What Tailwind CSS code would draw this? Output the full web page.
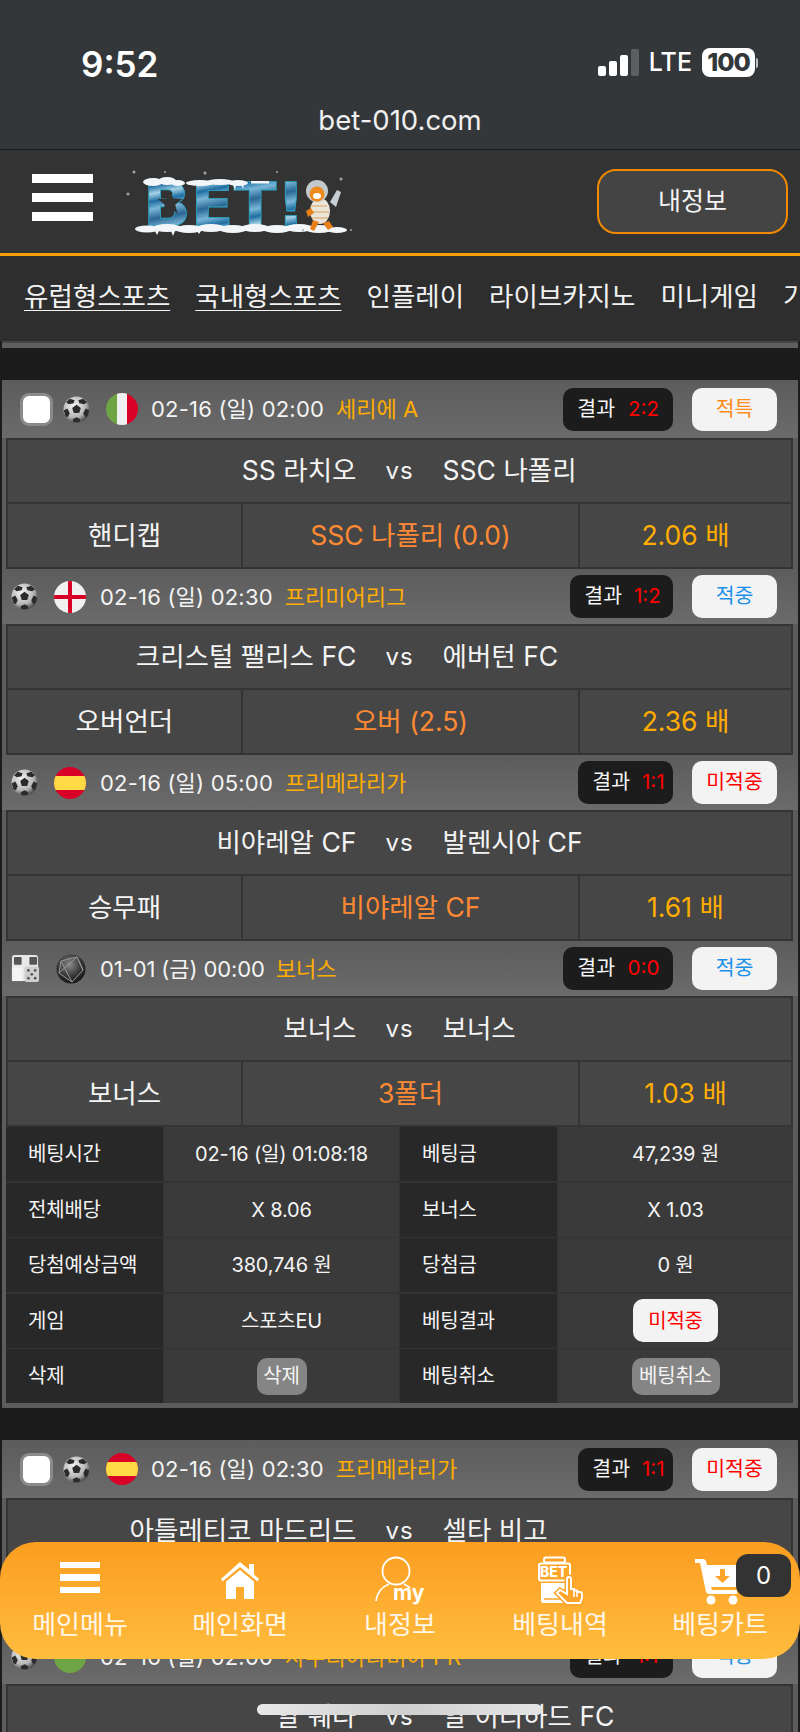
<!DOCTYPE html>
<html lang="ko">
<head>
<meta charset="UTF-8">
<meta name="viewport" content="width=device-width, initial-scale=1.0">
<title>bet-010.com</title>
<script src="https://cdn.jsdelivr.net/npm/@tailwindcss/browser@4"></script>
</head>
<body class="bg-[#1c1c1c] font-['Inter','Noto_Sans_CJK_KR',sans-serif] text-[#f4f4f4]">

<!-- 공용 아이콘 -->
<svg class="absolute w-0 h-0" xmlns="http://www.w3.org/2000/svg">
  <defs>
    <radialGradient id="ballBg" cx="40%" cy="35%" r="70%"><stop offset="0" stop-color="#f4f4f4"/><stop offset="0.65" stop-color="#b5b5b5"/><stop offset="1" stop-color="#3c3c3c"/></radialGradient>
    <radialGradient id="globeBg" cx="45%" cy="35%" r="70%"><stop offset="0" stop-color="#8a8a8a"/><stop offset="0.6" stop-color="#333"/><stop offset="1" stop-color="#111"/></radialGradient>
    <clipPath id="flagClip"><circle cx="16" cy="16" r="16"/></clipPath>
  </defs>
  <symbol id="ball" viewBox="0 0 28 28">
    <circle cx="14" cy="14" r="13.5" fill="url(#ballBg)"/>
    <polygon points="14,9 18.5,12.5 16.8,17.5 11.2,17.5 9.5,12.5" fill="#2b2b2b"/>
    <path d="M7 2.8 12 4.5 11 7.5 6 8.5 3.2 6.5ZM21 2.8 25 6.5 22 8.5 17 7.5 16 4.5ZM.8 15 4.5 13 7 18 5 22 2.6 21ZM27.2 15 25.4 21 23 22 21 18 23.5 13ZM10 24 14 22 18 24 17 27.2 11 27.2Z" fill="#2b2b2b"/>
  </symbol>
  <symbol id="flag-it" viewBox="0 0 32 32"><g clip-path="url(#flagClip)"><rect width="11" height="32" fill="#6da544"/><rect x="11" width="10" height="32" fill="#f0f0f0"/><rect x="21" width="11" height="32" fill="#d80027"/></g></symbol>
  <symbol id="flag-en" viewBox="0 0 32 32"><g clip-path="url(#flagClip)"><rect width="32" height="32" fill="#f0f0f0"/><rect x="14" width="4" height="32" fill="#d80027"/><rect y="14" width="32" height="4" fill="#d80027"/></g></symbol>
  <symbol id="flag-es" viewBox="0 0 32 32"><g clip-path="url(#flagClip)"><rect width="32" height="32" fill="#d80027"/><rect y="9" width="32" height="14" fill="#ffda44"/></g></symbol>
  <symbol id="flag-sa" viewBox="0 0 32 32"><g clip-path="url(#flagClip)"><rect width="32" height="32" fill="#6da544"/><rect x="8" y="8" width="16" height="5" fill="#f0f0f0"/></g></symbol>
  <symbol id="globe" viewBox="0 0 32 32">
    <circle cx="16" cy="16" r="14.5" fill="url(#globeBg)"/>
    <path d="M6 8 22 4 28 17 17 29 4 20ZM6 8 17 29M22 4 4 20M22 4 28 17" fill="none" stroke="#9a9a9a" stroke-width="1"/>
  </symbol>
  <symbol id="bonus" viewBox="0 0 30 30">
    <rect x="1" y="1" width="27" height="27" rx="3" fill="#e8e8e8"/>
    <rect x="3" y="3" width="8" height="8" rx="1" fill="#555"/><rect x="19" y="3" width="8" height="8" rx="1" fill="#555"/>
    <rect x="1" y="14" width="11" height="14" fill="#f4f4f4"/>
    <rect x="14" y="13" width="15" height="16" rx="2" fill="#cfcfcf"/>
    <circle cx="18" cy="17" r="1.4" fill="#555"/><circle cx="25" cy="17" r="1.4" fill="#555"/><circle cx="21.500" cy="21" r="1.4" fill="#555"/><circle cx="18" cy="25" r="1.4" fill="#555"/><circle cx="25" cy="25" r="1.4" fill="#555"/>
  </symbol>
</svg>

<div class="relative h-[1732px] w-[800px] overflow-hidden bg-[#1c1c1c]">

  <!-- 브라우저 상단 -->
  <div class="h-[149px] bg-[#34373a] relative">
    <div class="flex justify-between items-start pt-[44px] pl-[81px] pr-[42px]">
      <span class="text-[35px] leading-[40px] font-semibold text-white">9:52</span>
      <div class="flex items-center gap-[10px] pt-[4px]">
        <div class="flex items-end gap-[3px] h-[27px]">
          <span class="w-[8px] h-[10px] rounded-[2px] bg-white"></span>
          <span class="w-[8px] h-[15px] rounded-[2px] bg-white"></span>
          <span class="w-[8px] h-[21px] rounded-[2px] bg-white"></span>
          <span class="w-[8px] h-[27px] rounded-[2px] bg-[#5c5f62]"></span>
        </div>
        <span class="text-[25px] leading-[27px] font-medium text-white">LTE</span>
        <div class="flex items-center gap-[1px]">
          <span class="w-[53px] h-[29px] rounded-[8px] bg-white text-[#34373a] text-[25px] leading-[29px] font-extrabold text-center tracking-[-1px]">100</span>
          <span class="w-[2px] h-[10px] rounded-r-sm bg-white/70"></span>
        </div>
      </div>
    </div>
    <p class="absolute top-[104px] inset-x-0 text-center text-[27.5px] leading-[32px] text-[#f0f0f0]">bet-010.com</p>
  </div>

  <!-- 헤더 -->
  <header class="h-[107px] border-t border-[#1e1e1e] border-b-[3px] border-b-[#f7a000] bg-[#333333] flex items-center pl-[32px] pr-[12px]">
    <div class="flex flex-col gap-[10px] w-[61px] -mt-[9px]">
      <span class="h-[9px] bg-white"></span>
      <span class="h-[9px] bg-white"></span>
      <span class="h-[9px] bg-white"></span>
    </div>
    <!-- 로고 -->
    <svg class="ml-[32px] w-[230px] h-[68px] overflow-visible" viewBox="0 0 230 68">
      <defs>
        <linearGradient id="ice" x1="0" y1="0" x2="0.14" y2="0.3" spreadMethod="reflect"><stop offset="0" stop-color="#2a6794"/><stop offset="0.4" stop-color="#7ab6d8"/><stop offset="0.7" stop-color="#1f6ea3"/><stop offset="1" stop-color="#a4d3e6"/></linearGradient>
      </defs>
      <text x="18" y="58" font-family="DejaVu Sans" font-weight="700" font-size="60" textLength="162" lengthAdjust="spacingAndGlyphs" fill="url(#ice)" stroke="#2aa7c4" stroke-width="0.8">BET!</text>
      <polygon points="45,22 48.2,30.5 57.4,31 50.2,36.7 52.6,45.5 45,40.5 37.4,45.5 39.8,36.7 32.6,31 41.8,30.5" fill="#333"/>
      <!-- 눈 -->
      <g fill="#f3f6f8">
        <ellipse cx="28" cy="14" rx="10" ry="4"/><ellipse cx="42" cy="13" rx="9" ry="4"/><ellipse cx="53" cy="15" rx="7" ry="3"/>
        <ellipse cx="75" cy="15" rx="14" ry="3"/><ellipse cx="95" cy="14" rx="14" ry="3"/><ellipse cx="113" cy="15" rx="10" ry="3"/>
        <path d="M108 16h3l-1 7ZM116 16h3l-1 5Z"/>
        <rect x="126" y="13" width="18" height="2.500"/>
        <ellipse cx="22" cy="61" rx="12" ry="3.500"/><ellipse cx="42" cy="60" rx="14" ry="4"/><ellipse cx="64" cy="61" rx="14" ry="4"/><ellipse cx="86" cy="60" rx="14" ry="4"/>
        <ellipse cx="108" cy="61" rx="14" ry="4"/><ellipse cx="130" cy="60" rx="14" ry="4"/><ellipse cx="152" cy="61" rx="14" ry="4"/><ellipse cx="174" cy="60" rx="14" ry="4"/><ellipse cx="194" cy="61" rx="14" ry="4"/><ellipse cx="212" cy="62" rx="10" ry="3"/>
        <path d="M30 63h4l-2 4ZM46 63h4l-2 5ZM72 63h4l-2 3Z"/>
      </g>
      <!-- 호랑이 캐릭터 -->
      <path d="M205 34l7-12 4 2-5 15Z" fill="#c9ced4"/>
      <ellipse cx="195" cy="43" rx="10" ry="13" fill="#ece6da"/>
      <path d="M186 38h16M186 44h18M187 50h16" stroke="#d9a05a" stroke-width="1"/>
      <circle cx="192" cy="23" r="11" fill="#c2c8ce"/>
      <circle cx="192" cy="26" r="7.500" fill="#ee8a1c"/>
      <ellipse cx="192" cy="28" rx="4" ry="3" fill="#fff"/>
      <path d="M186 40l-5 3 2 6 6-4ZM204 53l4 6-5 3-5-7ZM188 52l-3 9 4 2 5-9Z" fill="#e8801a"/>
      <g fill="#a5a5a5">
        <circle cx="80" cy="5" r="1.500"/><circle cx="152" cy="4" r="1"/><circle cx="3" cy="26" r="1.500"/><circle cx="40" cy="4" r="1"/><circle cx="216" cy="11" r="1.500"/><circle cx="226" cy="62" r="1"/><circle cx="9" cy="4" r="1.500"/><circle cx="178" cy="62" r="1"/>
      </g>
    </svg>
    <button class="ml-auto w-[191px] h-[65px] rounded-[19px] border-[2.5px] border-[#f28a00] bg-[#444444] text-[25px] text-[#f4f4f4]">내정보</button>
  </header>

  <!-- 상단 메뉴 -->
  <nav class="h-[85px] bg-[#2e2e2e] flex items-center pl-[24px] gap-[25px] whitespace-nowrap text-[26.5px] text-[#f2f2f2] pb-[3px]">
    <a class="underline underline-offset-4 decoration-1">유럽형스포츠</a>
    <a class="underline underline-offset-4 decoration-1">국내형스포츠</a>
    <a>인플레이</a>
    <a>라이브카지노</a>
    <a>미니게임</a>
    <a>가상게임</a>
  </nav>
  <div class="h-[7px] mx-[2px] bg-[#5e5e5e] border-t-2 border-[#454545]"></div>

  <!-- 베팅 내역 1 -->
  <section class="mt-[32px] mx-[2px] pl-[4px] pr-[5px] pb-[5px] bg-[#5c5c5c]">
    <div class="h-[58px] -mx-[4px] -mr-[5px] pl-[18px] pr-[21px] flex items-center bg-gradient-to-b from-[#5c5c5c] to-[#6b6b6b]">
      <span class="w-[33px] h-[33px] rounded-[9px] bg-white border-[3px] border-[#8a8a8a]"></span>
      <svg class="w-[27px] h-[27px] ml-[10px]"><use href="#ball"/></svg>
      <svg class="w-[32px] h-[32px] ml-[16px]"><use href="#flag-it"/></svg>
      <span class="ml-[13px] text-[22px] leading-none tracking-[0.2px]">02-16 (일) 02:00</span>
      <span class="ml-[12px] text-[22px] leading-none text-[#ffad00]">세리에 A</span>
      <span class="ml-auto h-[43px] pl-[14px] pr-[13px] rounded-[10px] bg-[#1c1c1c] flex items-center gap-[12px] text-[20.5px]">결과 <b class="w-[33px] font-normal text-center text-[#ff0000]">2:2</b></span>
      <span class="ml-[19px] w-[85px] h-[43px] rounded-[10px] bg-[#f3f3f3] flex items-center justify-center text-[20.5px] text-[#ff8c1a]">적특</span>
    </div>
    <div class="border-y-2 border-[#343434] bg-[#464646]">
      <div class="h-[62px] border-x-2 border-[#343434] grid grid-cols-[1fr_auto_1fr] items-center text-[26.5px]">
        <span class="text-right">SS 라치오</span><span class="mx-[29px] text-[24px] tracking-[1px]">vs</span><span>SSC 나폴리</span>
      </div>
      <div class="h-[65px] border-t-2 border-[#343434] grid grid-cols-[233px_339px_1fr] border-x-2 text-[26.5px] text-center items-center">
        <span class="h-full flex items-center justify-center">핸디캡</span>
        <span class="h-full flex items-center justify-center border-x-2 border-[#343434] text-[#ff8a33]">SSC 나폴리 (0.0)</span>
        <span class="text-[#ffad00]">2.06 배</span>
      </div>
    </div>

    <div class="h-[55px] -mx-[4px] -mr-[5px] pl-[9px] pr-[21px] flex items-center bg-gradient-to-b from-[#5c5c5c] to-[#6b6b6b]">
      <svg class="w-[27px] h-[27px]"><use href="#ball"/></svg>
      <svg class="w-[32px] h-[32px] ml-[16px]"><use href="#flag-en"/></svg>
      <span class="ml-[14px] text-[22px] leading-none tracking-[0.2px]">02-16 (일) 02:30</span>
      <span class="ml-[12px] text-[22px] leading-none text-[#ffad00]">프리미어리그</span>
      <span class="ml-auto h-[43px] pl-[14px] pr-[13px] rounded-[10px] bg-[#1c1c1c] flex items-center gap-[12px] text-[20.5px]">결과 <b class="w-[26px] font-normal text-center text-[#ff0000]">1:2</b></span>
      <span class="ml-[19px] w-[85px] h-[43px] rounded-[10px] bg-[#f3f3f3] flex items-center justify-center text-[20.5px] text-[#1a90e8]">적중</span>
    </div>
    <div class="border-y-2 border-[#343434] bg-[#464646]">
      <div class="h-[62px] border-x-2 border-[#343434] grid grid-cols-[1fr_auto_1fr] items-center text-[26.5px]">
        <span class="text-right">크리스털 팰리스 FC</span><span class="mx-[29px] text-[24px] tracking-[1px]">vs</span><span>에버턴 FC</span>
      </div>
      <div class="h-[65px] border-t-2 border-[#343434] grid grid-cols-[233px_339px_1fr] border-x-2 text-[26.5px] text-center items-center">
        <span class="h-full flex items-center justify-center">오버언더</span>
        <span class="h-full flex items-center justify-center border-x-2 border-[#343434] text-[#ff8a33]">오버 (2.5)</span>
        <span class="text-[#ffad00]">2.36 배</span>
      </div>
    </div>

    <div class="h-[55px] -mx-[4px] -mr-[5px] pl-[9px] pr-[21px] flex items-center bg-gradient-to-b from-[#5c5c5c] to-[#6b6b6b]">
      <svg class="w-[27px] h-[27px]"><use href="#ball"/></svg>
      <svg class="w-[32px] h-[32px] ml-[16px]"><use href="#flag-es"/></svg>
      <span class="ml-[14px] text-[22px] leading-none tracking-[0.2px]">02-16 (일) 05:00</span>
      <span class="ml-[12px] text-[22px] leading-none text-[#ffad00]">프리메라리가</span>
      <span class="ml-auto h-[43px] pl-[14px] pr-[13px] rounded-[10px] bg-[#1c1c1c] flex items-center gap-[12px] text-[20.5px]">결과 <b class="w-[18px] font-normal text-center text-[#ff0000]">1:1</b></span>
      <span class="ml-[19px] w-[85px] h-[43px] rounded-[10px] bg-[#f3f3f3] flex items-center justify-center text-[20.5px] text-[#ff0000]">미적중</span>
    </div>
    <div class="border-y-2 border-[#343434] bg-[#464646]">
      <div class="h-[62px] border-x-2 border-[#343434] grid grid-cols-[1fr_auto_1fr] items-center text-[26.5px]">
        <span class="text-right">비야레알 CF</span><span class="mx-[29px] text-[24px] tracking-[1px]">vs</span><span>발렌시아 CF</span>
      </div>
      <div class="h-[65px] border-t-2 border-[#343434] grid grid-cols-[233px_339px_1fr] border-x-2 text-[26.5px] text-center items-center">
        <span class="h-full flex items-center justify-center">승무패</span>
        <span class="h-full flex items-center justify-center border-x-2 border-[#343434] text-[#ff8a33]">비야레알 CF</span>
        <span class="text-[#ffad00]">1.61 배</span>
      </div>
    </div>

    <div class="h-[55px] -mx-[4px] -mr-[5px] pl-[9px] pr-[21px] flex items-center bg-gradient-to-b from-[#5c5c5c] to-[#6b6b6b]">
      <svg class="w-[29px] h-[29px]"><use href="#bonus"/></svg>
      <svg class="w-[32px] h-[32px] ml-[15px]"><use href="#globe"/></svg>
      <span class="ml-[13px] text-[22px] leading-none tracking-[-0.1px]">01-01 (금) 00:00</span>
      <span class="ml-[11px] text-[22px] leading-none text-[#ffad00]">보너스</span>
      <span class="ml-auto h-[43px] pl-[14px] pr-[13px] rounded-[10px] bg-[#1c1c1c] flex items-center gap-[12px] text-[20.5px]">결과 <b class="w-[33px] font-normal text-center text-[#ff0000]">0:0</b></span>
      <span class="ml-[19px] w-[85px] h-[43px] rounded-[10px] bg-[#f3f3f3] flex items-center justify-center text-[20.5px] text-[#1a90e8]">적중</span>
    </div>
    <div class="border-y-2 border-[#343434] bg-[#464646]">
      <div class="h-[62px] border-x-2 border-[#343434] grid grid-cols-[1fr_auto_1fr] items-center text-[26.5px]">
        <span class="text-right">보너스</span><span class="mx-[29px] text-[24px] tracking-[1px]">vs</span><span>보너스</span>
      </div>
      <div class="h-[65px] border-t-2 border-[#343434] grid grid-cols-[233px_339px_1fr] border-x-2 text-[26.5px] text-center items-center">
        <span class="h-full flex items-center justify-center">보너스</span>
        <span class="h-full flex items-center justify-center border-x-2 border-[#343434] text-[#ff8a33]">3폴더</span>
        <span class="text-[#ffad00]">1.03 배</span>
      </div>
    </div>

    <!-- 베팅 요약 -->
    <div class="grid grid-cols-[157px_235px_157px_235px] gap-x-[1px] gap-y-[1.5px] auto-rows-[54px] bg-[#333333] text-[20px] tracking-[-0.2px] items-stretch">
      <div class="bg-[#282828] flex items-center pl-[22px]">베팅시간</div>
      <div class="bg-[#3a3a3a] flex items-center justify-center">02-16 (일) 01:08:18</div>
      <div class="bg-[#282828] flex items-center pl-[22px]">베팅금</div>
      <div class="bg-[#3a3a3a] flex items-center justify-center">47,239 원</div>

      <div class="bg-[#282828] flex items-center pl-[22px]">전체배당</div>
      <div class="bg-[#3a3a3a] flex items-center justify-center">X 8.06</div>
      <div class="bg-[#282828] flex items-center pl-[22px]">보너스</div>
      <div class="bg-[#3a3a3a] flex items-center justify-center">X 1.03</div>

      <div class="bg-[#282828] flex items-center pl-[22px]">당첨예상금액</div>
      <div class="bg-[#3a3a3a] flex items-center justify-center">380,746 원</div>
      <div class="bg-[#282828] flex items-center pl-[22px]">당첨금</div>
      <div class="bg-[#3a3a3a] flex items-center justify-center">0 원</div>

      <div class="bg-[#282828] flex items-center pl-[22px]">게임</div>
      <div class="bg-[#3a3a3a] flex items-center justify-center">스포츠EU</div>
      <div class="bg-[#282828] flex items-center pl-[22px]">베팅결과</div>
      <div class="bg-[#3a3a3a] flex items-center justify-center">
        <span class="w-[85px] h-[43px] rounded-[10px] bg-[#f3f3f3] flex items-center justify-center text-[#ff0000]">미적중</span>
      </div>

      <div class="bg-[#282828] flex items-center pl-[22px]">삭제</div>
      <div class="bg-[#3a3a3a] flex items-center justify-center">
        <span class="w-[50px] h-[37px] rounded-[10px] bg-[#858585] flex items-center justify-center">삭제</span>
      </div>
      <div class="bg-[#282828] flex items-center pl-[22px]">베팅취소</div>
      <div class="bg-[#3a3a3a] flex items-center justify-center">
        <span class="w-[88px] h-[37px] rounded-[10px] bg-[#858585] flex items-center justify-center">베팅취소</span>
      </div>
    </div>
  </section>

  <!-- 베팅 내역 2 -->
  <section class="mt-[32px] mx-[2px] pl-[4px] pr-[5px] bg-[#5c5c5c]">
    <div class="h-[58px] -mx-[4px] -mr-[5px] pl-[18px] pr-[21px] flex items-center bg-gradient-to-b from-[#5c5c5c] to-[#6b6b6b]">
      <span class="w-[33px] h-[33px] rounded-[9px] bg-white border-[3px] border-[#8a8a8a]"></span>
      <svg class="w-[27px] h-[27px] ml-[10px]"><use href="#ball"/></svg>
      <svg class="w-[32px] h-[32px] ml-[16px]"><use href="#flag-es"/></svg>
      <span class="ml-[13px] text-[22px] leading-none tracking-[0.2px]">02-16 (일) 02:30</span>
      <span class="ml-[12px] text-[22px] leading-none text-[#ffad00]">프리메라리가</span>
      <span class="ml-auto h-[43px] pl-[14px] pr-[13px] rounded-[10px] bg-[#1c1c1c] flex items-center gap-[12px] text-[20.5px]">결과 <b class="w-[18px] font-normal text-center text-[#ff0000]">1:1</b></span>
      <span class="ml-[19px] w-[85px] h-[43px] rounded-[10px] bg-[#f3f3f3] flex items-center justify-center text-[20.5px] text-[#ff0000]">미적중</span>
    </div>
    <div class="border-y-2 border-[#343434] bg-[#464646]">
      <div class="h-[62px] border-x-2 border-[#343434] grid grid-cols-[1fr_auto_1fr] items-center text-[26.5px]">
        <span class="text-right">아틀레티코 마드리드</span><span class="mx-[29px] text-[24px] tracking-[1px]">vs</span><span>셀타 비고</span>
      </div>
      <div class="h-[65px]"></div>
    </div>
    <div class="h-[55px] -mx-[4px] -mr-[5px] pl-[9px] pr-[21px] flex items-center bg-gradient-to-b from-[#5c5c5c] to-[#6b6b6b]">
      <svg class="w-[27px] h-[27px]"><use href="#ball"/></svg>
      <svg class="w-[32px] h-[32px] ml-[16px]"><use href="#flag-sa"/></svg>
      <span class="ml-[14px] text-[22px] leading-none tracking-[0.2px]">02-16 (일) 02:00</span>
      <span class="ml-[12px] text-[22px] leading-none text-[#ffad00]">사우디아라비아 PR</span>
      <span class="ml-auto h-[43px] pl-[14px] pr-[13px] rounded-[10px] bg-[#1c1c1c] flex items-center gap-[12px] text-[20.5px]">결과 <b class="w-[26px] font-normal text-center text-[#ff0000]">1:1</b></span>
      <span class="ml-[19px] w-[85px] h-[43px] rounded-[10px] bg-[#f3f3f3] flex items-center justify-center text-[20.5px] text-[#1a90e8]">적중</span>
    </div>
    <div class="border-t-2 border-[#343434] bg-[#464646] h-[80px]">
      <div class="h-[62px] border-x-2 border-[#343434] grid grid-cols-[1fr_auto_1fr] items-center text-[26.5px]">
        <span class="text-right">알 웨다</span><span class="mx-[29px] text-[24px] tracking-[1px]">vs</span><span>알 이티하드 FC</span>
      </div>
    </div>
  </section>

  <!-- 하단 고정 메뉴 -->
  <div class="absolute left-0 top-[1542px] w-[800px] h-[117px] rounded-[36px] bg-gradient-to-b from-[#fb9d1f] to-[#ffbd3e] grid grid-cols-5 text-[26px] text-[#fff6e6] text-center">
    <a class="flex flex-col items-center">
      <span class="h-[68px] flex flex-col justify-center gap-[6px] w-[40px] pt-[3px]">
        <i class="block h-[6.5px] bg-white"></i><i class="block h-[6.5px] bg-white"></i><i class="block h-[6.5px] bg-white"></i>
      </span>
      <span class="leading-[30px]">메인메뉴</span>
    </a>
    <a class="flex flex-col items-center">
      <svg class="w-[40px] h-[68px]" viewBox="0 0 40 68" fill="#fff">
        <path d="M20 20 1 37l1.500 2.500L20 25l17.500 14.500L39 37l-5-4.500V22h-5v5.500Z"/>
        <path d="M20 28 6 39.500V57h10V45h8v12h10V39.500Z"/>
      </svg>
      <span class="leading-[30px]">메인화면</span>
    </a>
    <a class="flex flex-col items-center relative">
      <svg class="w-[50px] h-[68px]" viewBox="0 0 50 68" fill="none" stroke="#fff" stroke-width="1.800">
        <circle cx="21" cy="29" r="13.500"/>
        <path d="M1 59C2 50 7 45 14 42"/>
        <path d="M29 42c2 1 4 2 6 4"/>
      </svg>
      <span class="absolute left-[73px] top-[38px] text-[21px] font-bold leading-[26px] text-white">my</span>
      <span class="leading-[30px]">내정보</span>
    </a>
    <a class="flex flex-col items-center relative">
      <svg class="w-[48px] h-[68px]" viewBox="0 0 48 68" fill="none" stroke="#fff" stroke-width="2">
        <rect x="8" y="15.500" width="21" height="5" rx="2"/>
        <rect x="3" y="21.500" width="31" height="17" rx="2"/>
        <path d="M5 41h26v18q0 2-2 2H7q-2 0-2-2Z" fill="#fff" stroke="none"/>
        <path d="M8 57h16" stroke="#fda42a" stroke-width="1.500"/>
        <path d="M31 37a2 2 0 0 1 4 0v10h3v1.500h3V50h3a2 2 0 0 1 2 2v4l-2 5H31l-10-10 3-3 7 4Z" fill="#fda42a" stroke="#fda42a" stroke-width="5"/>
        <path d="M31 37a2 2 0 0 1 4 0v10h3v1.500h3V50h3a2 2 0 0 1 2 2v4l-2 5H31l-10-10 3-3 7 4Z" fill="#fda42a"/>
        <path d="M38 49v6M41 50v5" stroke-width="1.500"/>
      </svg>
      <span class="absolute left-[60px] top-[21px] text-[14px] font-extrabold leading-[18px] text-white">BET</span>
      <span class="leading-[30px]">베팅내역</span>
    </a>
    <a class="flex flex-col items-center relative">
      <svg class="w-[46px] h-[68px] -ml-[4px]" viewBox="0 0 46 68" fill="#fff">
        <path d="M0 17h8q2 0 3 2l1 4h33l-4 22H16l1 3h25v4H14q-2 0-3-2L5 21H0Z"/>
        <circle cx="16" cy="58" r="4.500"/><circle cx="38" cy="58" r="4.500"/>
        <path d="M25 27h5v7h5l-7.500 7L20 34h5Z" fill="#fda42a"/>
      </svg>
      <span class="leading-[30px]">베팅카트</span>
      <span class="absolute left-[96px] top-[12px] w-[55px] h-[43px] rounded-[12px] bg-[#333333] text-white text-[24px] leading-[43px]">0</span>
    </a>
  </div>

  <!-- 홈 인디케이터 -->
  <div class="absolute left-[257px] top-[1704px] w-[285px] h-[11px] rounded-full bg-gradient-to-r from-[#e8e8e8] via-[#cfcfcf] to-[#e4e4e4]"></div>
</div>

</body>
</html>
